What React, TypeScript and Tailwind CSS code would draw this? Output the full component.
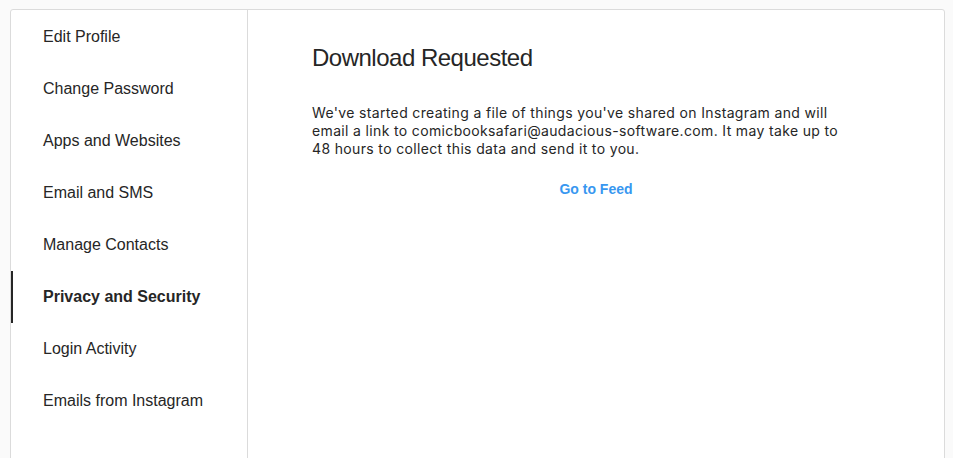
const items = [
  "Edit Profile",
  "Change Password",
  "Apps and Websites",
  "Email and SMS",
  "Manage Contacts",
  "Privacy and Security",
  "Login Activity",
  "Emails from Instagram",
];

export default function App() {
  const active = "Privacy and Security";

  return (
    <div
      className="min-h-screen bg-[#fafafa] pt-[9px] pl-[10px] pr-[8px] text-[#262626]"
      style={{ fontFamily: '"Liberation Sans", Arial, sans-serif' }}
    >
      <div className="flex h-[460px] bg-white border border-[#dbdbdb] rounded-[3px] overflow-hidden">
        <ul className="w-[237px] shrink-0 border-r border-[#dbdbdb] pt-[1px]">
          {items.map((item) => (
            <li
              key={item}
              className={
                item === active
                  ? "h-[52px] flex items-center pl-[30px] border-l-2 border-[#262626] text-[16px] font-semibold"
                  : "h-[52px] flex items-center pl-[32px] text-[16px]"
              }
            >
              {item}
            </li>
          ))}
        </ul>
        <main className="flex-1 px-[64px] pt-[33px]">
          <h1 className="text-[24px] leading-[30px] font-normal tracking-[-0.5px]">
            Download Requested
          </h1>
          <p className="mt-[31px] text-[14px] leading-[18px] max-w-[540px] tracking-[0.35px] font-['Inter',sans-serif]">
            We've started creating a file of things you've shared on Instagram
            and will email a link to comicbooksafari@audacious-software.com. It
            may take up to 48 hours to collect this data and send it to you.
          </p>
          <div className="max-w-[568px] mt-[19px] text-center">
            <button className="text-[14px] leading-[18px] font-semibold text-[#3897f0]">
              Go to Feed
            </button>
          </div>
        </main>
      </div>
    </div>
  );
}
